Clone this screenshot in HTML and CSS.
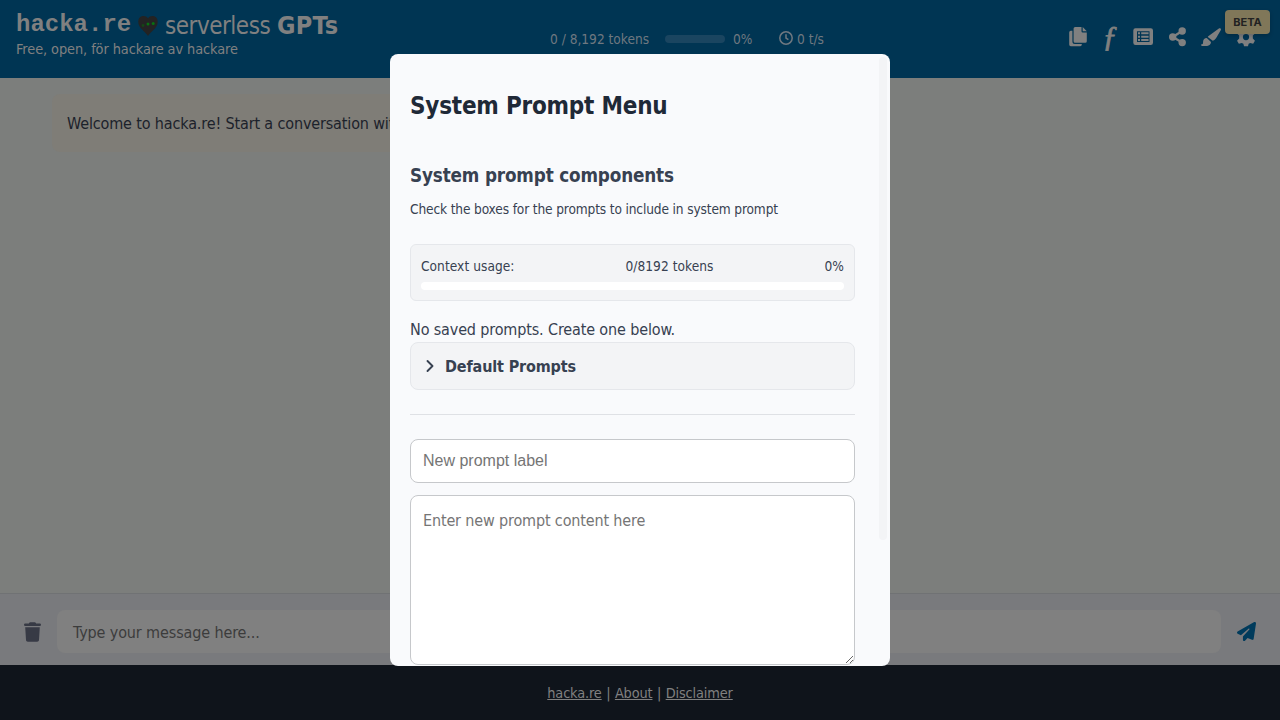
FILE: index.html
```html
<!DOCTYPE html>
<html lang="en">
<head>
<meta charset="utf-8">
<title>hacka.re</title>
<link rel="stylesheet" href="styles.css">
</head>
<body>
<header class="header">
  <div class="brand">
    <div class="logo"><span class="logo-name">hacka.re</span><svg class="heart" viewBox="0 0 20 20"><path d="M10 20C7 15 0 12 .3 5.500C.5-.5 7.500-1.500 10 2.500C12.500-1.500 19.500-.5 19.700 5.500C20 12 13 15 10 20Z" fill="#232323"/><circle cx="5" cy="9.500" r="1.400" fill="#164518"/><circle cx="10" cy="8" r="1.500" fill="#087010"/><circle cx="15.200" cy="7.500" r="1.500" fill="#087010"/></svg><span class="logo-serverless">serverless</span><span class="logo-gpts">GPTs</span></div>
    <div class="tagline">Free, open, för hackare av hackare</div>
  </div>
  <div class="stats">
    <span class="stat-tokens">0 / 8,192 tokens</span>
    <span class="stat-bar"></span>
    <span class="stat-pct">0%</span>
    <svg class="clock" viewBox="0 0 14 14"><circle cx="7" cy="7" r="6.200"/><path d="M7 3.300V7L9.400 8.700"/></svg>
    <span class="stat-speed">0 t/s</span>
  </div>
  <nav class="tools">
    <svg class="tool" viewBox="0 0 20 20"><path d="M9.200 0H15.500V4.200a1.200 1.200 0 0 0 1.200 1.200H20.800V14.200a1.600 1.600 0 0 1-1.600 1.600H9.200a1.600 1.600 0 0 1-1.600-1.600V1.600A1.600 1.600 0 0 1 9.200 0zM16.700 0L20.800 4.200H16.700zM4.800 3.800H6.400V14.500A2.500 2.500 0 0 0 8.900 17H15.800V17.600A1.600 1.600 0 0 1 14.200 19.200H4.800A1.600 1.600 0 0 1 3.200 17.600V5.400A1.600 1.600 0 0 1 4.800 3.800z"/></svg>
    <span class="tool-fn">ƒ</span>
    <svg class="tool" viewBox="0 0 20 20"><path fill-rule="evenodd" d="M1.500 1.300H16.800A2.200 2.200 0 0 1 19 3.500V15.800A2.200 2.200 0 0 1 16.800 18H1.500A2.200 2.200 0 0 1-.7 15.800V3.500A2.200 2.200 0 0 1 1.500 1.300zM3 4.200V15.100H15.500V4.200z"/><path d="M4 5.300h2v2H4zM7.200 5.300H14.600v2H7.200zM4 8.700h2v2H4zM7.200 8.700H14.600v2H7.200zM4 12.100h2v2H4zM7.200 12.100H14.600v2H7.200z"/></svg>
    <svg class="tool" viewBox="0 0 20 20"><circle cx="4.700" cy="10" r="3.700"/><circle cx="14.200" cy="4" r="3.700"/><circle cx="14.200" cy="15.600" r="3.700"/><path class="tool-line" d="M14.200 4L4.700 10L14.200 15.600"/></svg>
    <svg class="tool tool-brush" viewBox="0 0 576 512"><path d="M339 367l3-3c60-33 105-84 133-147l97-161c8-15 5-33-8-45-14-12-34-13-49-3L229 219c-15 10-27 24-34 40zM166 288c-62 2-106 48-106 108 0 31 3 68-28 68-18 0-32 14-32 24 0 14 14 24 32 24h144c62 0 112-50 112-112z"/></svg>
    <svg class="tool" viewBox="0 0 512 512"><path fill-rule="evenodd" d="M206 20h100l18 66 40 23 75-22 46 80-54 50v78l54 54-46 80-75-22-40 23-18 62H206l-18-62-40-23-75 22-46-80 54-54v-78l-54-50 46-80 75 22 40-23zM256 176a80 80 0 1 0 0 160 80 80 0 0 0 0-160z"/></svg>
  </nav>
  <span class="beta">BETA</span>
</header>
<main class="chat"><div class="welcome">Welcome to hacka.re! Start a conversation with AI models.</div></main>
<section class="composer">
  <svg class="trash" viewBox="0 0 448 512"><path d="M135 18C141 7 152 0 164 0h120c12 0 23 7 29 18l7 14h96a32 32 0 0 1 0 64H32a32 32 0 0 1 0-64h96zM32 128H416l-21 339c-2 25-23 45-48 45H101c-25 0-46-20-48-45z"/></svg>
  <div class="message">Type your message here...</div>
  <svg class="send" viewBox="0 0 512 512"><path d="M498 6c11 7 16 20 14 33L448 455c-2 10-8 18-16 23-9 5-19 6-28 2l-120-50-68 74c-9 9-23 13-35 8s-21-17-21-30v-84c0-4 2-8 4-11L332 204c6-6 6-16 0-22s-15-6-22-1L106 360 18 316C7 311 0 300 0 288s6-23 16-29L464 3c11-6 24-5 34 3z"/></svg>
</section>
<footer class="footer"><a>hacka.re</a> <i>|</i> <a>About</a> <i>|</i> <a>Disclaimer</a></footer>
<div class="overlay">
  <div class="modal">
    <div class="modal-body">
      <h2>System Prompt Menu</h2>
      <h3>System prompt components</h3>
      <p class="hint">Check the boxes for the prompts to include in system prompt</p>
      <div class="usage">
        <div class="usage-row"><span>Context usage:</span><span>0/8192 tokens</span><span>0%</span></div>
        <div class="usage-bar"></div>
      </div>
      <p class="empty">No saved prompts. Create one below.</p>
      <div class="defaults"><svg class="chevron" viewBox="0 0 8 14"><path d="M1.500 2L6.500 7L1.500 12"/></svg><span>Default Prompts</span></div>
      <div class="rule"></div>
      <input class="label-input" placeholder="New prompt label">
      <textarea class="content-input" placeholder="Enter new prompt content here"></textarea>
    </div>
    <div class="scroll"></div>
  </div>
</div>
</body>
</html>
```
FILE: styles.css
```css
* { box-sizing: border-box; }
body { margin: 0; height: 720px; overflow: hidden; display: flex; flex-direction: column; background: #7c7e7c; font: 16px/24px "DejaVu Sans Condensed", "DejaVu Sans", sans-serif; letter-spacing: -.14px; }
svg { display: block; flex: none; overflow: visible; }
.header { position: relative; height: 78px; flex: none; background: #003553; color: #808080; display: flex; padding: 10px 24px 0 16px; }
.brand { width: 534px; }
.logo { display: flex; align-items: center; height: 29px; font-size: 24px; white-space: nowrap; }
.logo-name { font: bold 24px/24px "Liberation Mono", monospace; width: 122px; letter-spacing: 0; }
.heart { width: 20px; height: 20px; margin: 2px 7px 0 0; }
.logo-serverless { width: 112px; letter-spacing: -.5px; padding-top: 2px; }
.logo-gpts { font-weight: bold; font-size: 25px; letter-spacing: .3px; padding-top: 2px; }
.tagline { font-size: 14.400px; line-height: 20px; letter-spacing: -.08px; }
.stats { display: flex; align-items: center; height: 58px; font-size: 13.600px; letter-spacing: 0; white-space: nowrap; color: #6f7880; }
.stat-tokens { width: 115px; }
.stat-bar { width: 60px; height: 8px; border-radius: 4px; background: #1a4560; }
.stat-pct { width: 54px; padding-left: 8px; }
.clock { width: 14px; height: 14px; margin-bottom: 2px; fill: none; stroke: #6f7880; stroke-width: 1.500; }
.stat-speed { padding-left: 4px; }
.tools { margin-left: auto; display: flex; align-items: center; gap: 14px; height: 54px; }
.tool { width: 20px; height: 20px; fill: #808080; }
.tool-line { fill: none; stroke: #808080; stroke-width: 2.300; }
.tool-brush { margin: 0 1px 0 -1px; }
.tool-fn { width: 20px; padding-bottom: 3px; text-align: center; font: italic 30px/30px "Liberation Serif", serif; -webkit-text-stroke: .8px #808080; }
.beta { position: absolute; left: 1225px; top: 10px; width: 45px; height: 24px; border-radius: 4px; background: #807759; color: #222; font: bold 11px/24px Inter, sans-serif; letter-spacing: 0; text-align: center; box-shadow: 0 2px 4px rgba(0,0,0,.2); }
.chat { flex: 1; padding: 16px 52px; }
.welcome { width: 700px; height: 58px; padding: 18px 15px; border-radius: 8px; background: #7f7d77; color: #1c222b; white-space: nowrap; }
.composer { height: 72px; border-top: 1px solid #707274; background: #797a7d; display: flex; align-items: center; padding: 4px 24px 0; flex: none; }
.trash { width: 17px; height: 20px; fill: #373a45; }
.message { width: 1164px; flex: none; height: 43px; margin: 0 16px; border-radius: 8px; background: #808080; padding: 11px 16px; color: #3c3c3c; letter-spacing: -.12px; }
.send { width: 19px; height: 19px; fill: #003b5c; }
.footer { height: 55px; flex: none; background: #0f141b; color: #808080; font-size: 14.400px; line-height: 57px; text-align: center; }
.footer a { text-decoration: underline; }
.footer i { font-style: normal; margin: 0 .5px; }
.overlay { position: absolute; inset: 0; display: flex; justify-content: center; padding-top: 54px; }
.modal { width: 500px; height: 612px; border-radius: 8px; background: #f9fafc; overflow: hidden; display: flex; padding: 0 3px 0 20px; color: #374151; }
.modal-body { width: 445px; white-space: nowrap; }
h2 { margin: 37px 0 0; font-size: 24px; line-height: 30px; letter-spacing: -.22px; color: #1f2937; }
h3 { margin: 43px 0 0; font-size: 18.720px; line-height: 24px; letter-spacing: -.15px; }
.hint { margin: 11px 0 0; font-size: 13.600px; line-height: 20px; }
.usage { margin-top: 25px; height: 57px; border: 1px solid #e5e7eb; border-radius: 6px; background: #f3f4f6; padding: 11px 10px; }
.usage-row { display: flex; justify-content: space-between; font-size: 13.600px; letter-spacing: .05px; line-height: 20px; }
.usage-bar { height: 8px; border-radius: 4px; background: #fff; margin-top: 6px; }
.empty { margin: 16px 0 0; line-height: 25px; }
.defaults { height: 48px; border: 1px solid #e5e7eb; border-radius: 8px; background: #f3f4f6; display: flex; align-items: center; padding-left: 15px; gap: 11px; font-weight: bold; }
.defaults span { padding-top: 2px; }
.chevron { width: 8px; height: 14px; fill: none; stroke: #374151; stroke-width: 1.900; stroke-linecap: round; stroke-linejoin: round; }
.rule { height: 1px; background: #dfe1e5; margin: 24px 0; }
.label-input, .content-input { display: block; width: 445px; border: 1px solid #c6c8cb; border-radius: 8px; background: #fff; margin: 0; padding: 12px; outline: 0; }
.label-input { height: 44px; font: 16px "Liberation Sans", sans-serif; }
.content-input { height: 170px; margin-top: 12px; padding-top: 13px; font: 16px/24px "DejaVu Sans Condensed", sans-serif; letter-spacing: -.15px; }
.label-input::placeholder, .content-input::placeholder { color: #757575; }
.scroll { width: 8px; height: 483px; margin: 3px 0 0 auto; border-radius: 4px; background: #f3f4f6; }
```
